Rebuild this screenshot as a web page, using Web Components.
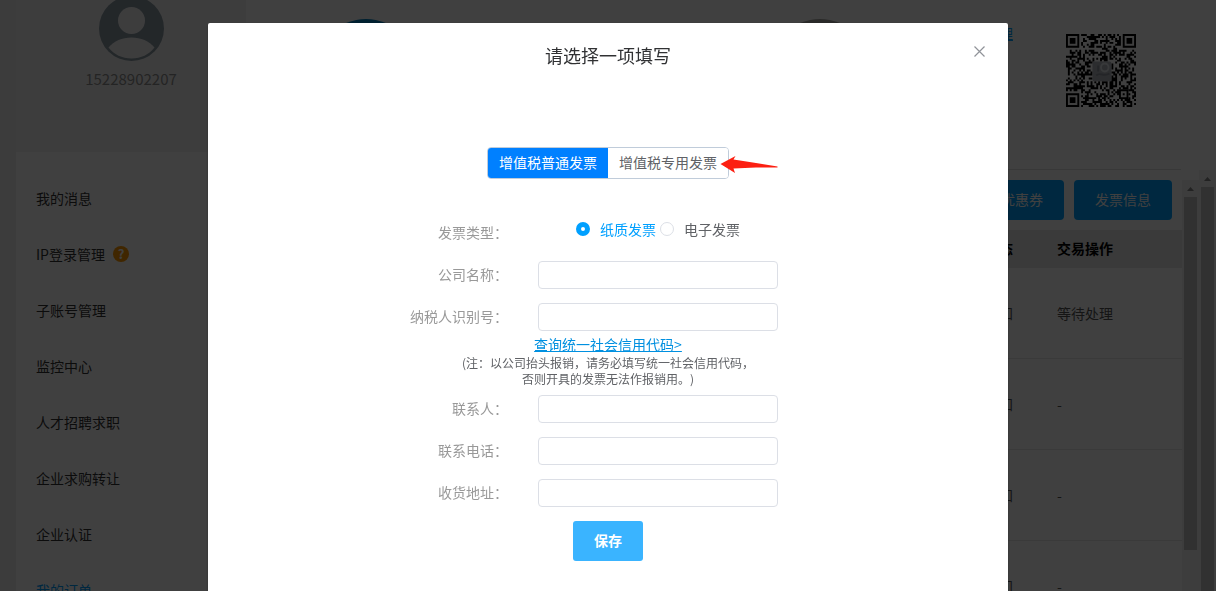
<!DOCTYPE html>
<html lang="zh-CN">
<head>
<meta charset="UTF-8">
<meta name="viewport" content="width=device-width, initial-scale=1.0">
<title>发票信息</title>
<style>
    body {
        margin: 0;
        height: 100vh;
        overflow: hidden;
        background-color: #f0f0f0;
        color: #333;
        font: 14px/20px "Noto Sans CJK SC", sans-serif;
        text-spacing-trim: space-all;
    }
</style>
</head>
<body>
<account-page>
    <user-sidebar slot="sidebar" phone="15228902207"></user-sidebar>
    <account-summary slot="summary"></account-summary>
    <order-list slot="orders"></order-list>
</account-page>

<modal-dialog heading="请选择一项填写">
    <invoice-form></invoice-form>
</modal-dialog>

<script>
class AccountPage extends HTMLElement {
    connectedCallback() {
        this.attachShadow({ mode: 'open' });
        this.shadowRoot.innerHTML = `
            <style>
                :host {
                    display: flex;
                    height: 100%;
                    padding-left: 16px;
                }

                main {
                    flex: 1;
                    min-width: 0;
                    display: flex;
                    flex-direction: column;
                    background-color: white;
                }

                .lower {
                    flex: 1;
                    min-height: 0;
                    display: flex;
                }

                .content {
                    flex: 1;
                    min-width: 0;
                    display: flex;
                    padding-top: 10px;
                }

                .scroll {
                    flex: 1;
                    min-width: 0;
                    overflow: hidden;
                }
            </style>
            <slot name="sidebar"></slot>
            <main>
                <slot name="summary"></slot>
                <div class="lower">
                    <div class="content">
                        <div class="scroll"><slot name="orders"></slot></div>
                        <scroll-rail style="--rest: 41px"></scroll-rail>
                    </div>
                    <scroll-rail></scroll-rail>
                </div>
            </main>
        `;
    }
}

class ScrollRail extends HTMLElement {
    connectedCallback() {
        this.attachShadow({ mode: 'open' });
        this.shadowRoot.innerHTML = `
            <style>
                :host {
                    display: flex;
                    flex-direction: column;
                    flex: none;
                    width: 17px;
                    background-color: #f1f1f1;
                }

                svg {
                    display: block;
                    width: 17px;
                    height: 17px;
                }

                .thumb {
                    flex: 1;
                    margin: 0 2px var(--rest, 0);
                    background-color: #c1c1c1;
                }
            </style>
            <svg viewBox="0 0 17 17"><path d="M5 11 8.500 7 12 11z" fill="#888"/></svg>
            <div class="thumb"></div>
        `;
    }
}

class UserSidebar extends HTMLElement {
    connectedCallback() {
        this.attachShadow({ mode: 'open' });
        this.shadowRoot.innerHTML = `
            <style>
                :host {
                    display: flex;
                    flex-direction: column;
                    flex: none;
                    width: 230px;
                    background-color: white;
                }

                header {
                    flex: none;
                    height: 152px;
                    background-color: #f4f4f4;
                    text-align: center;
                }

                svg {
                    display: block;
                    margin: -4px auto 8px;
                }

                .phone {
                    font-size: 15px;
                    line-height: 20px;
                    color: #909090;
                }

                nav {
                    display: flex;
                    flex-direction: column;
                    padding: 18px 20px 0;
                }

                a {
                    display: flex;
                    align-items: center;
                    gap: 8px;
                    height: 56px;
                    flex: none;
                    color: #333;
                    text-decoration: none;
                }

                a.active {
                    color: #00a0ff;
                }

                .help {
                    width: 16px;
                    height: 16px;
                    border-radius: 50%;
                    background-color: #ff9900;
                    color: white;
                    font-size: 13px;
                    font-weight: 700;
                    line-height: 16px;
                    text-align: center;
                }
            </style>
            <header>
                <svg width="65" height="65" viewBox="0 0 65 65">
                    <circle cx="32.500" cy="32.500" r="32.500" fill="#8c9ba5"/>
                    <circle cx="32.500" cy="24.500" r="13.500" fill="#f4f4f4"/>
                    <path d="M9.500 51.500C15 45 23 41.500 32.500 41.500S50 45 55.500 51.500C50 58.500 42 62.500 32.500 62.500S15 58.500 9.500 51.500z" fill="#f4f4f4"/>
                </svg>
                <div class="phone">${this.getAttribute('phone')}</div>
            </header>
            <nav>
                <a href="#">我的消息</a>
                <a href="#">IP登录管理<span class="help">?</span></a>
                <a href="#">子账号管理</a>
                <a href="#">监控中心</a>
                <a href="#">人才招聘求职</a>
                <a href="#">企业求购转让</a>
                <a href="#">企业认证</a>
                <a href="#" class="active">我的订单</a>
            </nav>
        `;
    }
}

class AccountSummary extends HTMLElement {
    connectedCallback() {
        this.attachShadow({ mode: 'open' });
        this.shadowRoot.innerHTML = `
            <style>
                :host {
                    display: flex;
                    box-sizing: border-box;
                    flex: none;
                    height: 170px;
                    margin-right: 35px;
                    padding: 19px 45px 0 70px;
                    border-bottom: 1px solid #e0e0e0;
                }

                .badge {
                    flex: none;
                    width: 100px;
                    height: 100px;
                    margin-right: 354px;
                    border-radius: 50%;
                    background-color: #0080c0;
                }

                .badge.off {
                    margin-right: auto;
                    background-color: #a8a8a4;
                }

                a {
                    margin: 4px 53px 0 0;
                    color: #00a0ff;
                }

                qr-code {
                    margin-top: 15px;
                }
            </style>
            <span class="badge"></span>
            <span class="badge off"></span>
            <a href="#">管理</a>
            <qr-code></qr-code>
        `;
    }
}

class QrCode extends HTMLElement {
    connectedCallback() {
        this.attachShadow({ mode: 'open' });
        this.shadowRoot.innerHTML = `
            <style>
                :host {
                    display: block;
                    width: 70px;
                    height: 73px;
                }

                svg {
                    display: block;
                    width: 100%;
                    height: 100%;
                }
            </style>
            <svg viewBox="0 0 37 37" preserveAspectRatio="none">
                <path d="${this.modules()}"/>
                <path fill-rule="evenodd" d="M0 0h7v7H0zM1 1v5h5V1zM2 2h3v3H2zM30 0h7v7h-7zM31 1v5h5V1zM32 2h3v3h-3zM0 30h7v7H0zM1 31v5h5v-5zM2 32h3v3H2zM28 28h5v5h-5zM29 29v3h3v-3zM30 30h1v1h-1z"/>
                <rect x="14" y="14" width="10" height="10" rx="1" fill="#b0b4bc"/>
                <circle cx="20.500" cy="17" r="2" fill="none" stroke="#dde2e8"/>
                <path d="M16 21c2-2 4 1 7-1M17 16v3" fill="none" stroke="#8f959e"/>
            </svg>
        `;
    }

    modules() {
        let seed = 2207;
        let d = '';
        for (let y = 0; y < 37; y++) {
            for (let x = 0; x < 37; x++) {
                seed = (seed * 16807) % 2147483647;
                const finder = (x < 8 && y < 8) || (x > 28 && y < 8) || (x < 8 && y > 28);
                const align = x > 27 && x < 33 && y > 27 && y < 33;
                const logo = x > 13 && x < 24 && y > 13 && y < 24;
                if (!finder && !align && !logo && seed % 100 < 53) d += `M${x} ${y}h1v1h-1z`;
            }
        }
        return d;
    }
}

class OrderList extends HTMLElement {
    connectedCallback() {
        this.attachShadow({ mode: 'open' });
        this.shadowRoot.innerHTML = `
            <style>
                :host {
                    display: block;
                }

                .actions {
                    display: flex;
                    justify-content: flex-end;
                    gap: 10px;
                    padding: 0 10px 10px 0;
                }

                button {
                    min-width: 98px;
                    height: 40px;
                    padding: 0 21px 2px;
                    border: 0;
                    border-radius: 4px;
                    background-color: #00a0ff;
                    color: white;
                    font: inherit;
                }

                table {
                    width: 100%;
                    border-spacing: 0;
                }

                th {
                    box-sizing: border-box;
                    height: 38px;
                    padding: 0 0 2px;
                    background-color: #e8e8e8;
                    color: black;
                    font-weight: 700;
                }

                td {
                    box-sizing: border-box;
                    height: 91px;
                    padding: 0;
                    border-bottom: 1px solid #e8e8e8;
                    color: #555;
                }

                th:first-child, td:first-child {
                    padding-right: 44px;
                    text-align: right;
                }

                th:last-child, td:last-child {
                    width: 125px;
                    text-align: left;
                }
            </style>
            <div class="actions">
                <button type="button">领优惠券</button>
                <button type="button">发票信息</button>
            </div>
            <table>
                <thead>
                    <tr><th>状态</th><th>交易操作</th></tr>
                </thead>
                <tbody>
                    <tr><td>未知</td><td>等待处理</td></tr>
                    <tr><td>未知</td><td>-</td></tr>
                    <tr><td>未知</td><td>-</td></tr>
                    <tr><td>未知</td><td>-</td></tr>
                </tbody>
            </table>
        `;
    }
}

class ModalDialog extends HTMLElement {
    connectedCallback() {
        this.attachShadow({ mode: 'open' });
        this.shadowRoot.innerHTML = `
            <style>
                :host {
                    position: fixed;
                    inset: 0;
                    display: flex;
                    justify-content: center;
                    align-items: flex-start;
                    padding-top: 23px;
                    background-color: rgba(0, 0, 0, 0.75);
                }

                section {
                    position: relative;
                    width: 800px;
                    max-width: 100%;
                    min-height: 100%;
                    border-radius: 2px 2px 0 0;
                    background-color: white;
                    box-shadow: 0 1px 3px rgba(0, 0, 0, 0.3);
                }

                h2 {
                    margin: 0;
                    padding: 20px 20px 10px;
                    color: #303133;
                    font-size: 18px;
                    font-weight: 400;
                    line-height: 24px;
                    text-align: center;
                }

                button {
                    position: absolute;
                    top: 20px;
                    right: 21px;
                    width: 16px;
                    height: 16px;
                    padding: 0;
                    border: 0;
                    background: none;
                }

                svg {
                    display: block;
                }
            </style>
            <section role="dialog" aria-labelledby="heading">
                <h2 id="heading">${this.getAttribute('heading')}</h2>
                <button type="button" aria-label="关闭">
                    <svg width="16" height="16" viewBox="0 0 16 16"><path d="M3.500 3.500l10 10M13.500 3.500l-10 10" stroke="#909399" stroke-width="1.200"/></svg>
                </button>
                <slot></slot>
            </section>
        `;
    }
}

class InvoiceForm extends HTMLElement {
    connectedCallback() {
        this.attachShadow({ mode: 'open' });
        this.shadowRoot.innerHTML = `
            <style>
                :host {
                    display: block;
                    padding-top: 70px;
                }

                form {
                    display: flex;
                    flex-direction: column;
                    gap: 14px;
                    margin-top: 40px;
                }

                .radios {
                    display: flex;
                    justify-content: center;
                    gap: 4px;
                }

                .radios label {
                    display: flex;
                    align-items: center;
                    gap: 10px;
                    height: 20px;
                    color: #606266;
                    line-height: 18px;
                }

                .radios label:has(:checked) {
                    color: #00a0ff;
                }

                input[type="radio"] {
                    appearance: none;
                    box-sizing: border-box;
                    width: 14px;
                    height: 14px;
                    margin: 0;
                    border: 1px solid #dcdfe6;
                    border-radius: 50%;
                    background-color: white;
                }

                input[type="radio"]:checked {
                    border: 5px solid #00a0ff;
                }

                .tip {
                    margin: -10px 0 -6px;
                    color: #606266;
                    font-size: 12px;
                    line-height: 16px;
                    text-align: center;
                }

                .tip a {
                    display: block;
                    width: fit-content;
                    margin: 0 auto;
                    padding-bottom: 2px;
                    color: #0090e0;
                    font-size: 14px;
                    line-height: 18px;
                }

                .save {
                    align-self: center;
                    width: 70px;
                    height: 40px;
                    padding: 0 0 2px;
                    border: 0;
                    border-radius: 3px;
                    background-color: #3ab4ff;
                    color: white;
                    font: inherit;
                    font-weight: 700;
                }
            </style>
            <invoice-tabs></invoice-tabs>
            <form>
                <form-row label="发票类型：">
                    <div class="radios">
                        <label><input type="radio" name="kind" checked>纸质发票</label>
                        <label><input type="radio" name="kind">电子发票</label>
                    </div>
                </form-row>
                <form-row label="公司名称：" input></form-row>
                <form-row label="纳税人识别号：" input></form-row>
                <div class="tip">
                    <a href="#">查询统一社会信用代码&gt;</a>
                    (注：以公司抬头报销，请务必填写统一社会信用代码，<br>否则开具的发票无法作报销用。)
                </div>
                <form-row label="联系人：" input></form-row>
                <form-row label="联系电话：" input></form-row>
                <form-row label="收货地址：" input></form-row>
                <button class="save" type="button">保存</button>
            </form>
        `;
    }
}

class InvoiceTabs extends HTMLElement {
    connectedCallback() {
        this.attachShadow({ mode: 'open' });
        this.shadowRoot.innerHTML = `
            <style>
                :host {
                    display: flex;
                    justify-content: center;
                }

                .tabs {
                    position: relative;
                    display: flex;
                    border: 1px solid #c0ccda;
                    border-radius: 4px;
                }

                button {
                    height: 30px;
                    padding: 0 11px 2px;
                    border: 0;
                    border-radius: 0 3px 3px 0;
                    background-color: white;
                    color: #606266;
                    font: inherit;
                }

                button.active {
                    border-radius: 3px 0 0 3px;
                    background-color: #0080ff;
                    color: white;
                }

                svg {
                    position: absolute;
                    top: 7px;
                    left: 100%;
                    margin-left: -8px;
                }
            </style>
            <div class="tabs">
                <button type="button" class="active">增值税普通发票</button>
                <button type="button">增值税专用发票</button>
                <svg width="58" height="20" viewBox="0 0 58 20"><path d="M0.500 9 15.500 1 13.500 4.500 36 8 57.500 11.500V12.500L36 12.500 13.500 13.500 15 18z" fill="#fc2012"/></svg>
            </div>
        `;
    }
}

class FormRow extends HTMLElement {
    connectedCallback() {
        this.attachShadow({ mode: 'open' });
        const text = this.getAttribute('label');
        const isInput = this.hasAttribute('input');
        this.shadowRoot.innerHTML = `
            <style>
                :host {
                    display: flex;
                    gap: 30px;
                    min-height: 28px;
                }

                .label {
                    flex: 0 0 37.5%;
                    color: #999;
                    line-height: 26px;
                    text-align: right;
                }

                .field {
                    width: 240px;
                }

                input {
                    display: block;
                    box-sizing: border-box;
                    width: 100%;
                    height: 28px;
                    padding: 0 10px;
                    border: 1px solid #dcdfe6;
                    border-radius: 4px;
                    background-color: white;
                    color: #606266;
                    font: inherit;
                }
            </style>
            ${isInput ? `<label class="label" for="field">${text}</label>` : `<span class="label">${text}</span>`}
            <div class="field">${isInput ? '<input id="field" type="text">' : '<slot></slot>'}</div>
        `;
    }
}

customElements.define('account-page', AccountPage);
customElements.define('scroll-rail', ScrollRail);
customElements.define('user-sidebar', UserSidebar);
customElements.define('account-summary', AccountSummary);
customElements.define('qr-code', QrCode);
customElements.define('order-list', OrderList);
customElements.define('modal-dialog', ModalDialog);
customElements.define('invoice-form', InvoiceForm);
customElements.define('invoice-tabs', InvoiceTabs);
customElements.define('form-row', FormRow);
</script>
</body>
</html>
